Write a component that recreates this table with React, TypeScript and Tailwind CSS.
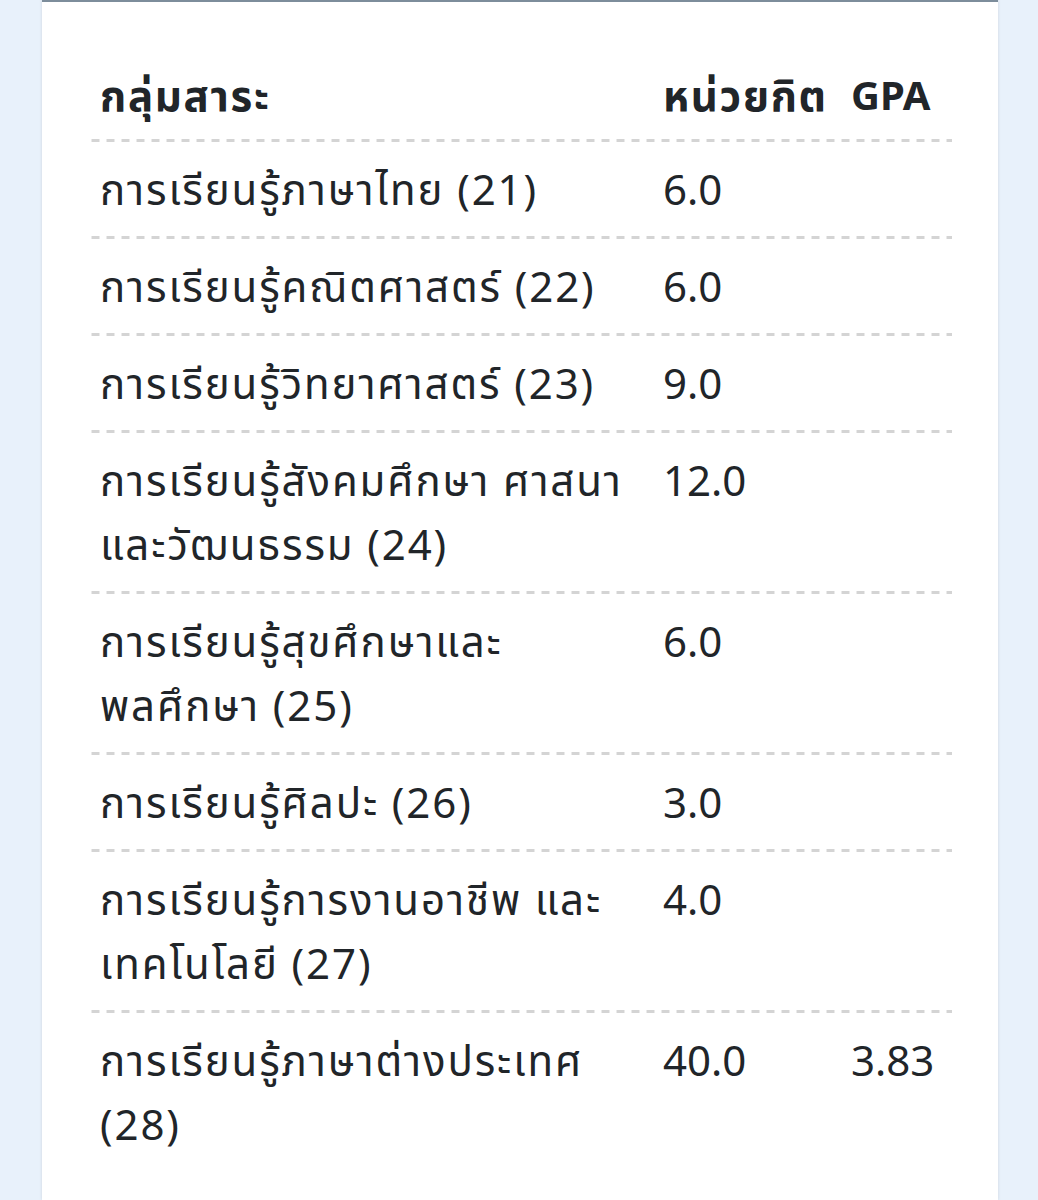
import { FC } from 'react';

interface Row {
    name: string[];
    credit: string;
    gpa?: string;
}

const rows: Row[] = [
    { name: ['การเรียนรู้ภาษาไทย (21)'], credit: '6.0' },
    { name: ['การเรียนรู้คณิตศาสตร์ (22)'], credit: '6.0' },
    { name: ['การเรียนรู้วิทยาศาสตร์ (23)'], credit: '9.0' },
    { name: ['การเรียนรู้สังคมศึกษา ศาสนา', 'และวัฒนธรรม (24)'], credit: '12.0' },
    { name: ['การเรียนรู้สุขศึกษาและ', 'พลศึกษา (25)'], credit: '6.0' },
    { name: ['การเรียนรู้ศิลปะ (26)'], credit: '3.0' },
    { name: ['การเรียนรู้การงานอาชีพ และ', 'เทคโนโลยี (27)'], credit: '4.0' },
    { name: ['การเรียนรู้ภาษาต่างประเทศ', '(28)'], credit: '40.0', gpa: '3.83' },
];

const dashed =
    'bg-[linear-gradient(to_right,#d4d4d4_8px,transparent_8px)] bg-[length:15px_3px] bg-bottom bg-repeat-x';

const App: FC = () => {
    return (
        <div className="min-h-[1200px] bg-[#e8f1fb] font-['Noto_Sans','Noto_Sans_Thai',sans-serif] text-[#212529]">
            <div className="mx-[42px] w-[956px] min-h-[1200px] bg-white border-t-2 border-[#7d8d9b] shadow-[0_0_3px_rgba(0,0,0,0.12)] pl-[44px] pt-[45px]">
                <div className="w-[866px] text-[42px] leading-[64px]">
                    <div className={`grid grid-cols-[563px_188px_115px] pt-[16px] pb-[15px] ${dashed}`}>
                        <div className="px-[14px] font-bold tracking-[0.04em]">กลุ่มสาระ</div>
                        <div className="px-[14px] font-bold tracking-[0.04em]">หน่วยกิต</div>
                        <div className="px-[14px] font-bold text-[40px]">GPA</div>
                    </div>
                    {rows.map((r, i) => (
                        <div
                            key={i}
                            className={`grid grid-cols-[563px_188px_115px] pt-[15px] pb-[18px] ${i < rows.length - 1 ? dashed : ''}`}
                        >
                            <div className="px-[14px] tracking-[0.045em] whitespace-nowrap">
                                {r.name.map((l, j) => (
                                    <div key={j}>{l}</div>
                                ))}
                            </div>
                            <div className="px-[14px]">{r.credit}</div>
                            <div className="px-[14px]">{r.gpa}</div>
                        </div>
                    ))}
                </div>
            </div>
        </div>
    );
};

export default App;
